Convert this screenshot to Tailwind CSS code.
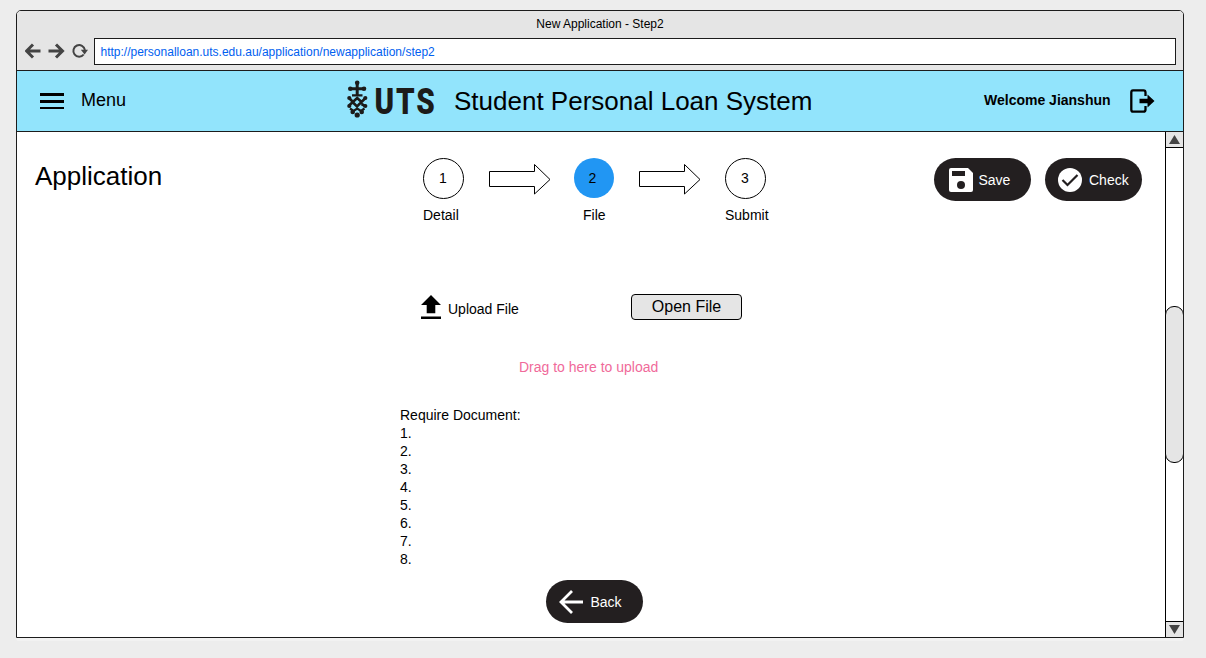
<!DOCTYPE html>
<html lang="en">
<head>
<meta charset="utf-8">
<title>New Application - Step2</title>
<script src="https://cdn.jsdelivr.net/npm/@tailwindcss/browser@4"></script>
</head>
<body class="h-[658px] overflow-hidden bg-[#ededed] pt-[10px] pl-4 font-['Liberation_Sans',Arial,sans-serif] text-sm text-black">
<div class="flex h-[628px] w-[1168px] flex-col overflow-hidden rounded-t-[5px] border border-[#1c1c1c] bg-white whitespace-nowrap">
  <div class="h-[60px] shrink-0 border-b border-[#1c1c1c] bg-[#e5e5e5]">
    <div class="h-[27px] pt-[4px] text-center text-[12px] leading-[18px]">New Application - Step2</div>
    <div class="flex items-center pl-2">
      <svg class="h-[26px] w-[69px] shrink-0" viewBox="25 39.500 69 26" fill="none" stroke="#444" stroke-width="3">
        <path d="M40.500 51.500H27M33 45 26.500 51.500 33 58"/>
        <path d="M48.500 51.500H62M56 45 62.500 51.500 56 58"/>
        <path d="M83.700 55A5.800 5.800 0 1 1 84.900 50.500" stroke-width="2"/>
        <path d="M80.800 50.300H88L84.600 55Z" fill="#444" stroke="none"/>
      </svg>
      <div class="h-[27px] w-[1082px] border border-[#1c1c1c] bg-white pl-[5.5px] text-[12px] leading-[26px] text-[#0060f0]">http://personalloan.uts.edu.au/application/newapplication/step2</div>
    </div>
  </div>
  <header class="flex h-[61px] shrink-0 items-center border-b border-[#1c1c1c] bg-[#92e4fc] pl-[23px]">
    <svg class="h-4 w-6" viewBox="0 0 24 16" shape-rendering="crispEdges"><path d="M0 0h24v2.5H0zM0 7h24v2.5H0zM0 13.500h24V16H0z"/></svg>
    <span class="mb-[2px] ml-[17px] w-[266px] text-[18px] leading-[22px]">Menu</span>
    <svg class="h-[40px] w-[96px] shrink-0 overflow-visible text-[#1c1b1a]" viewBox="347 81 96 40" fill="currentColor">
      <g fill="none" stroke="currentColor" stroke-width="3">
        <path d="M357.200 83V95.500M350.500 88.800H364"/>
        <path d="M352 95.300H362.500" stroke-width="2.200"/>
        <path d="M349 105.500 357.200 98 361 101.500M365.500 98 357 106.500 353.500 103M349.500 98.500 352.500 101.500M361.500 104 365 106" stroke-width="2.600"/>
        <path d="M350 108.500 353.500 111 357.200 108.500 361 111 364.500 108.500" stroke-width="2.200"/>
      </g>
      <g><circle cx="357.200" cy="82.700" r="2.300"/><circle cx="350.300" cy="88.800" r="2.300"/><circle cx="364" cy="88.800" r="2.300"/><circle cx="349.300" cy="98" r="2.100"/><circle cx="365.300" cy="98" r="2.100"/><circle cx="349.300" cy="106" r="2.100"/><circle cx="365.300" cy="106" r="2.100"/><circle cx="352.700" cy="112" r="2.300"/><circle cx="361.700" cy="112" r="2.300"/><circle cx="357.200" cy="115" r="2.600"/></g>
      <text transform="translate(374.500 114) scale(.81 1)" x="0 26.500 51.500" y="0" font-family="Roboto, sans-serif" font-weight="900" font-size="36.500">UTS</text>
    </svg>
    <h1 class="ml-[11px] w-[530px] text-[26px] leading-[32px]">Student Personal Loan System</h1>
    <b class="mb-[2px] w-[146px] text-sm leading-4">Welcome Jianshun</b>
    <svg class="h-6 w-[25px]" viewBox="0 0 25 24"><path d="M15.500 7V3.500Q15.500 1.300 13.500 1.300H3Q1.300 1.300 1.300 3.500V20.500Q1.300 22.700 3 22.700H13.500Q15.500 22.700 15.500 20.500V17" fill="none" stroke="#000" stroke-width="2.300"/><path d="M9.500 9.700H17.500V5.500L24.500 12 17.500 18.500V14.300H9.500Z"/></svg>
  </header>
  <div class="flex min-h-0 flex-1">
    <main class="w-[1148px] shrink-0 pt-[26px]">
      <div class="flex h-[136px] items-start pl-[18px]">
        <h2 class="mt-[2px] w-[388px] text-[26px] leading-[32px]">Application</h2>
        <div class="w-[66px]">
          <div class="size-[41px] rounded-full border border-black pr-px text-center leading-[39px]">1</div>
          <div class="mt-[8px] leading-4">Detail</div>
        </div>
        <svg class="mt-[6px] h-[31px] w-[62px]" viewBox="0 0 62 31"><path d="M.5 7.500H45.500V.5L61 15.500 45.500 30V22.500H.5Z" fill="#fff" stroke="#000"/></svg>
        <div class="ml-[23px] w-[65px]">
          <div class="size-[40px] rounded-full bg-[#2196f3] pr-[3px] text-center leading-[40px]">2</div>
          <div class="mt-[9px] pl-[9px] leading-4">File</div>
        </div>
        <svg class="mt-[6px] h-[31px] w-[62px]" viewBox="0 0 62 31"><path d="M.5 7.500H45.500V.5L61 15.500 45.500 30V22.500H.5Z" fill="#fff" stroke="#000"/></svg>
        <div class="ml-[24px] w-[209px]">
          <div class="size-[41px] rounded-full border border-black pr-px text-center leading-[39px]">3</div>
          <div class="mt-[8px] leading-4">Submit</div>
        </div>
        <button class="flex h-[43px] w-[97px] items-center rounded-full bg-[#231f20] pt-px pl-[15px] text-white">
          <svg class="mr-[5.5px] h-6 w-6" viewBox="0 0 24 24"><path d="M2 0H19L24 5V22Q24 24 22 24H2Q0 24 0 22V2Q0 0 2 0Z" fill="#fff"/><path d="M3 3H16V8H3Z" fill="#231f20"/><circle cx="12" cy="17" r="4" fill="#231f20"/></svg>Save
        </button>
        <button class="ml-[14px] flex h-[43px] w-[97px] items-center rounded-full bg-[#231f20] pt-px pl-[13px] text-white">
          <svg class="mr-[7px] h-6 w-6" viewBox="0 0 24 24"><circle cx="12" cy="12" r="12" fill="#fff"/><path d="M4.500 12 9.500 17 19.500 7" fill="none" stroke="#231f20" stroke-width="2.200"/></svg>Check
        </button>
      </div>
      <div class="flex h-[65px] items-start pl-[404px]">
        <svg class="mt-px h-6 w-5" viewBox="0 0 20 24"><path d="M10 0 20 10H14.300V18.300H5.700V10H0ZM0 21.500H20V24H0Z"/></svg>
        <span class="mt-[7px] ml-[7px] w-[183px] leading-4">Upload File</span>
        <button class="h-[26px] w-[111px] rounded-[4px] border border-black bg-[#e5e5e5] text-base leading-[24px]">Open File</button>
      </div>
      <p class="h-[47px] pl-[502px] leading-4 text-[#f06a9a]">Drag to here to upload</p>
      <div class="pl-[383px] leading-[18px]">
        <p>Require Document:</p>
        <ol><li>1.</li><li>2.</li><li>3.</li><li>4.</li><li>5.</li><li>6.</li><li>7.</li><li>8.</li></ol>
      </div>
      <button class="mt-[12px] ml-[529px] flex h-[43px] w-[97px] items-center rounded-full bg-[#231f20] pt-px pl-[13px] text-white">
        <svg class="mr-[7.5px] h-6 w-6" viewBox="0 0 24 24" fill="none" stroke="#fff" stroke-width="2.800"><path d="M24 12H2M13 1 2 12 13 23"/></svg>Back
      </button>
    </main>
    <div class="flex w-[18px] shrink-0 flex-col border-l border-black bg-white">
      <div class="flex h-4 items-center justify-center border-b border-black bg-[#e5e5e5]"><svg class="h-[9px] w-[11px]" viewBox="0 0 11 9"><path d="M5.500 0 11 9H0Z" fill="#444"/></svg></div>
      <div class="mt-[158px] -mr-px -ml-px h-[157px] rounded-[9px] border border-black bg-[#e5e5e5]"></div>
      <div class="mt-auto flex h-4 items-center justify-center border-t border-black bg-[#e5e5e5]"><svg class="h-[9px] w-[11px]" viewBox="0 0 11 9"><path d="M0 0H11L5.500 9Z" fill="#444"/></svg></div>
    </div>
  </div>
</div>
<div class="h-[3px] w-[1168px] rounded-b bg-[#f2f2f2]"></div>
</body>
</html>
